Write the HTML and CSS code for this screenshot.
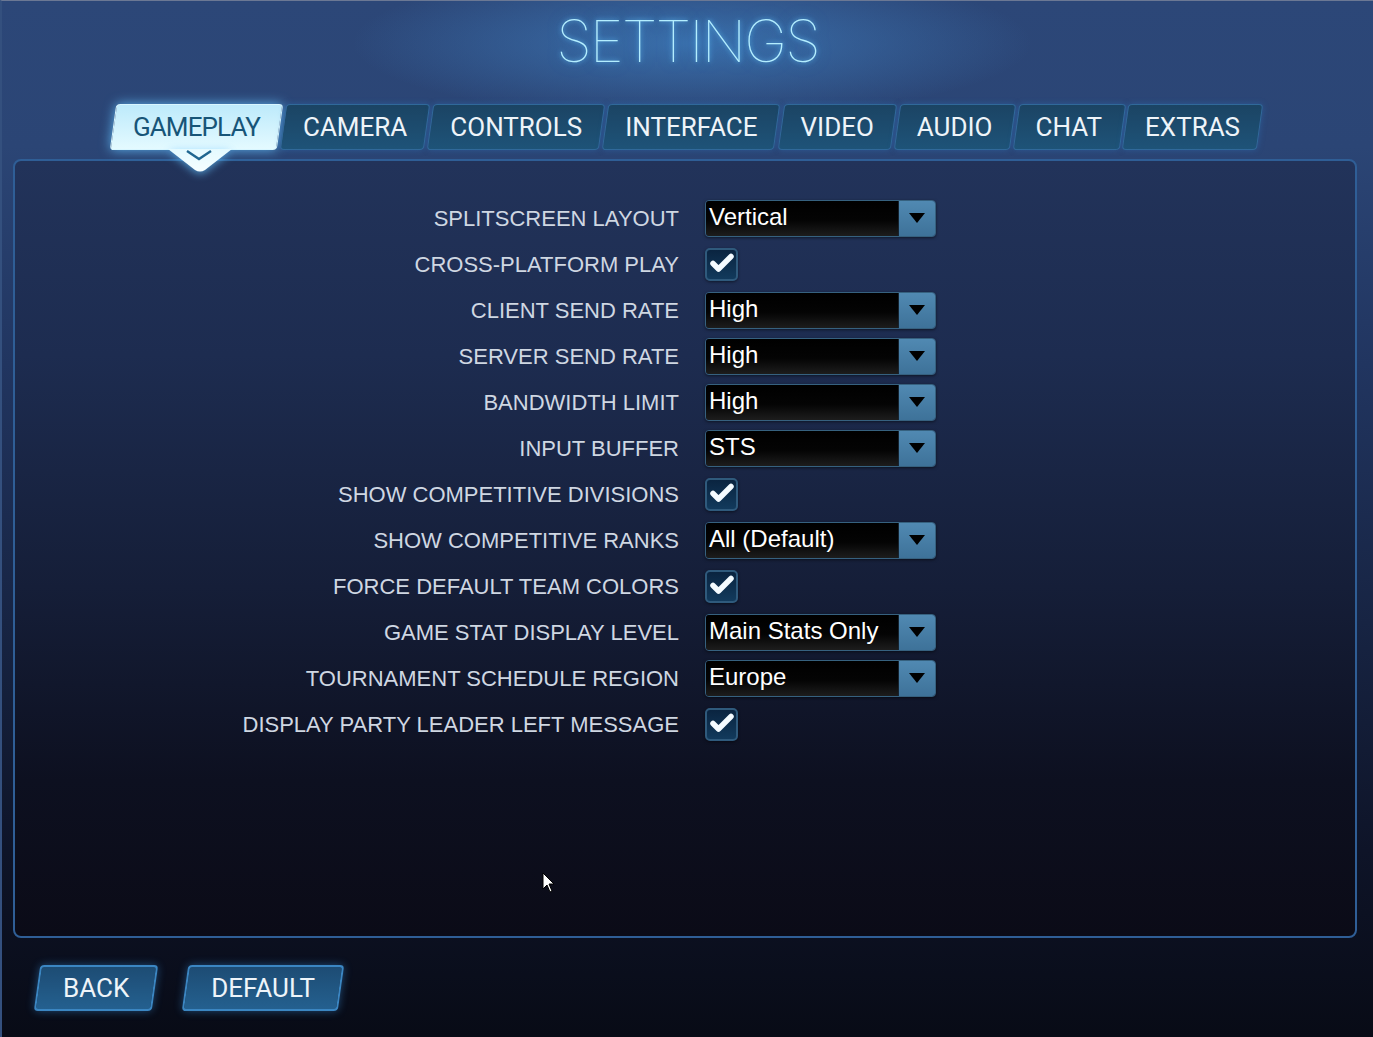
FILE: index.html
```html
<!DOCTYPE html>
<html lang="en">

<head>
    <meta charset="UTF-8">
    <meta name="viewport" content="width=device-width, initial-scale=1.0">
    <title>Settings</title>
    <link rel="stylesheet" href="styles.css">
</head>

<body>
    <div class="screen">
        <h1 class="title">SETTINGS</h1>

        <nav class="tabs">
            <a class="tab active"><span>GAMEPLAY</span>
                <svg class="pointer" width="64" height="24" viewBox="0 0 64 24">
                    <defs>
                        <linearGradient id="ptr" x1="0" y1="0" x2="0" y2="1">
                            <stop offset="0" stop-color="#e4faff" />
                            <stop offset="1" stop-color="#f6feff" />
                        </linearGradient>
                    </defs>
                    <path d="M0 0 H64 L37 21 Q32 24 27 21 Z" fill="url(#ptr)" />
                    <path d="M19 2 L31 10 L43 2" fill="none" stroke="#1f6690" stroke-width="2.4" />
                </svg>
            </a>
            <a class="tab"><span>CAMERA</span></a>
            <a class="tab"><span>CONTROLS</span></a>
            <a class="tab"><span>INTERFACE</span></a>
            <a class="tab"><span>VIDEO</span></a>
            <a class="tab"><span>AUDIO</span></a>
            <a class="tab"><span>CHAT</span></a>
            <a class="tab"><span>EXTRAS</span></a>
        </nav>

        <section class="panel">
            <div class="row">
                <label>SPLITSCREEN LAYOUT</label>
                <div class="select"><span class="value">Vertical</span><span class="arrow"></span></div>
            </div>
            <div class="row">
                <label>CROSS-PLATFORM PLAY</label>
                <span class="check"><svg width="33" height="33" viewBox="0 0 33 33"><path d="M8 16.5 L13.5 22 L26 9.5" /></svg></span>
            </div>
            <div class="row">
                <label>CLIENT SEND RATE</label>
                <div class="select"><span class="value">High</span><span class="arrow"></span></div>
            </div>
            <div class="row">
                <label>SERVER SEND RATE</label>
                <div class="select"><span class="value">High</span><span class="arrow"></span></div>
            </div>
            <div class="row">
                <label>BANDWIDTH LIMIT</label>
                <div class="select"><span class="value">High</span><span class="arrow"></span></div>
            </div>
            <div class="row">
                <label>INPUT BUFFER</label>
                <div class="select"><span class="value">STS</span><span class="arrow"></span></div>
            </div>
            <div class="row">
                <label>SHOW COMPETITIVE DIVISIONS</label>
                <span class="check"><svg width="33" height="33" viewBox="0 0 33 33"><path d="M8 16.5 L13.5 22 L26 9.5" /></svg></span>
            </div>
            <div class="row">
                <label>SHOW COMPETITIVE RANKS</label>
                <div class="select"><span class="value">All (Default)</span><span class="arrow"></span></div>
            </div>
            <div class="row">
                <label>FORCE DEFAULT TEAM COLORS</label>
                <span class="check"><svg width="33" height="33" viewBox="0 0 33 33"><path d="M8 16.5 L13.5 22 L26 9.5" /></svg></span>
            </div>
            <div class="row">
                <label>GAME STAT DISPLAY LEVEL</label>
                <div class="select"><span class="value">Main Stats Only</span><span class="arrow"></span></div>
            </div>
            <div class="row">
                <label>TOURNAMENT SCHEDULE REGION</label>
                <div class="select"><span class="value">Europe</span><span class="arrow"></span></div>
            </div>
            <div class="row">
                <label>DISPLAY PARTY LEADER LEFT MESSAGE</label>
                <span class="check"><svg width="33" height="33" viewBox="0 0 33 33"><path d="M8 16.5 L13.5 22 L26 9.5" /></svg></span>
            </div>
        </section>

        <div class="footer">
            <a class="btn"><span>BACK</span></a>
            <a class="btn"><span>DEFAULT</span></a>
        </div>

        <!-- mouse pointer -->
        <svg class="cursor" width="14" height="22" viewBox="0 0 14 22">
            <path d="M1 1 V17 L5 13 L8 20 L10 19 L7 12 H12 Z" fill="#fff" stroke="#000" stroke-width="1" />
        </svg>
    </div>
</body>

</html>
```
FILE: styles.css
```css
/* Reset some default styles */
body,
h1 {
    margin: 0;
    padding: 0;
}

body {
    background-color: #080b16;
    font-family: "Liberation Sans", Arial, sans-serif;
}

.screen {
    position: relative;
    width: 1373px;
    height: 1037px;
    box-sizing: border-box;
    overflow: hidden;
    border-top: 1px solid #6b7894;
    border-left: 2px solid #34507e;
    background:
        radial-gradient(ellipse 340px 75px at 690px 42px, rgba(70, 145, 215, 0.55), rgba(70, 145, 215, 0) 100%),
        linear-gradient(#2c4778 0%, #2b4575 14%, #213560 35%, #172443 60%, #0e1428 82%, #080b16 100%);
}

/* Title */
.title {
    height: 80px;
    text-align: center;
    font-family: Inter, "Liberation Sans", sans-serif;
    font-weight: 100;
    font-size: 58px;
    line-height: 80px;
    letter-spacing: -2px;
    color: #b4eeff;
    text-shadow: 0 0 5px rgba(100, 200, 255, 0.95), 0 0 14px rgba(60, 150, 230, 0.6);
}

/* Tabs */
.tabs {
    display: flex;
    gap: 3px;
    height: 46px;
    margin-top: 23px;
    padding-left: 111px;
}

.tab {
    position: relative;
    display: flex;
    align-items: center;
    height: 46px;
    padding: 0 20px;
    font-family: Roboto, "Liberation Sans", sans-serif;
    font-size: 26px;
    color: #eef4f9;
    text-decoration: none;
}

.tab::before {
    content: "";
    position: absolute;
    inset: 0;
    transform: skewX(-8deg);
    background: linear-gradient(#1b4464, #1e5378);
    border: 1px solid #30699a;
    border-radius: 4px;
    box-shadow: 0 0 6px rgba(50, 130, 210, 0.35);
}

.tab span {
    position: relative;
}

.tab.active {
    color: #175578;
    letter-spacing: -0.9px;
}

.tab.active::before {
    background: linear-gradient(#bdeafb, #e4faff);
    border-color: #d8f6ff;
    box-shadow: 0 0 12px rgba(100, 195, 255, 0.85);
}

.pointer {
    position: absolute;
    top: 45px;
    left: 55px;
    filter: drop-shadow(0 2px 4px rgba(100, 195, 255, 0.7));
}

/* Settings panel */
.panel {
    height: 779px;
    margin: 9px 16px 0 11px;
    padding-top: 34px;
    box-sizing: border-box;
    border: 2px solid #2f5e96;
    border-radius: 8px;
    background: linear-gradient(#22335a 0%, #1d2c50 25%, #151e38 55%, #0d1020 80%, #0b0b17 100%);
}

.row {
    display: grid;
    grid-template-columns: 664px 231px;
    column-gap: 26px;
    align-items: center;
    height: 46px;
}

.row label {
    text-align: right;
    font-size: 22px;
    line-height: 24px;
    padding-top: 2px;
    color: #cfd7e2;
}

.select {
    display: flex;
    width: 231px;
    height: 37px;
    box-sizing: border-box;
    border: 1px solid #36617f;
    border-radius: 4px;
    overflow: hidden;
    box-shadow: 0 1px 3px rgba(0, 0, 0, 0.5);
}

.select .value {
    flex: 1;
    padding-left: 3px;
    line-height: 32px;
    font-size: 24px;
    color: #fff;
    background: linear-gradient(#000 0%, #040404 55%, #1d1d1d 100%);
}

.select .arrow {
    display: flex;
    align-items: center;
    justify-content: center;
    width: 36px;
    border-left: 1px solid #16232f;
    background: linear-gradient(#5089b2, #3e7299);
}

.select .arrow::after {
    content: "";
    border-left: 8px solid transparent;
    border-right: 8px solid transparent;
    border-top: 10px solid #000;
}

.check {
    display: block;
    width: 33px;
    height: 33px;
    box-sizing: border-box;
    border: 2px solid #2f5a7c;
    border-radius: 5px;
    background: linear-gradient(#0a2440, #123a5c);
    box-shadow: 0 1px 3px rgba(0, 0, 0, 0.5);
}

.check svg {
    display: block;
    margin: -3px -2px -1px;
}

.check path {
    fill: none;
    stroke: #f4fbff;
    stroke-width: 5.5;
    stroke-linecap: round;
    stroke-linejoin: round;
}

/* Bottom buttons */
.footer {
    display: flex;
    gap: 30px;
    margin-top: 27px;
    padding-left: 35px;
}

.btn {
    position: relative;
    display: flex;
    align-items: center;
    height: 46px;
    padding: 0 26px;
    font-family: Roboto, "Liberation Sans", sans-serif;
    font-size: 26px;
    color: #eef4f9;
    text-decoration: none;
}

.btn::before {
    content: "";
    position: absolute;
    inset: 0;
    transform: skewX(-8deg);
    background: linear-gradient(#1d4c74, #24608f);
    border: 2px solid #3b86c2;
    border-radius: 4px;
    box-shadow: 0 0 8px rgba(60, 150, 230, 0.45);
}

.btn span {
    position: relative;
}

.cursor {
    position: absolute;
    left: 540px;
    top: 871px;
}
```
